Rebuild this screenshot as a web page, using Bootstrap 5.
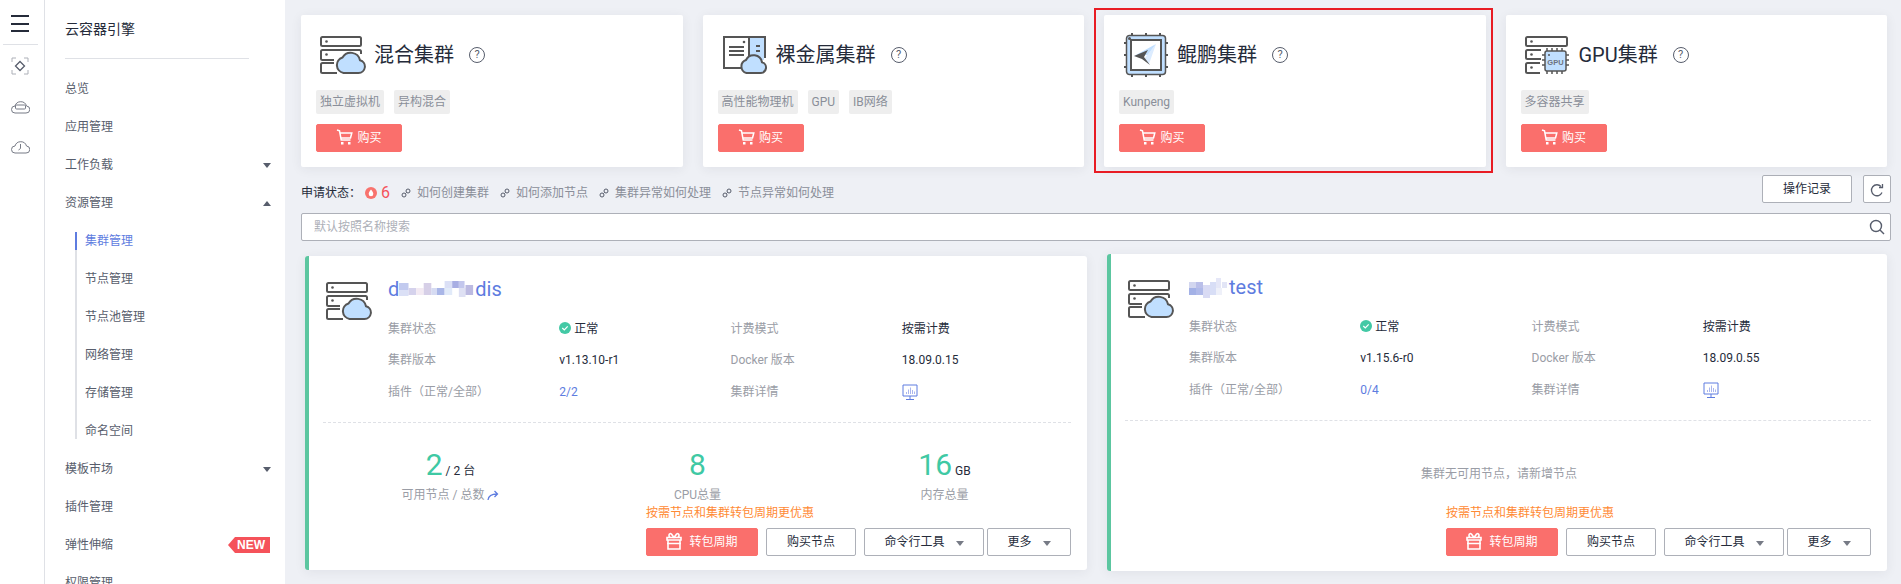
<!DOCTYPE html>
<html lang="zh-CN">
<head>
  <meta charset="UTF-8" />
  <meta name="viewport" content="width=device-width, initial-scale=1.0" />
  <title>云容器引擎</title>
  <link href="https://cdn.jsdelivr.net/npm/bootstrap@5.3.0/dist/css/bootstrap.min.css" rel="stylesheet">
  <style>
    html, body { height: 584px; overflow: hidden; }
    body {
      font-family: Roboto, "Noto Sans CJK SC", sans-serif;
      font-size: 12px;
      line-height: 18px;
      background-color: #eef0f5;
      color: #252b3a;
    }
    .page-wrap { height: 584px; }

    /* icon rail */
    .rail { width: 45px; flex: none; background: #fff; border-right: 1px solid #dfe1e6; }
    .burger { height: 45px; margin: 0 6px 0 3px; border-bottom: 1px solid #dfe1e6; padding: 15px 0 0 8px; }
    .burger i { display: block; width: 18px; height: 2px; background: #252b3a; margin-bottom: 5.5px; }
    .rail-ico { height: 40px; padding-left: 11px; padding-top: 11px; }
    .rail-ico:first-of-type { padding-top: 12px; }

    /* side nav */
    .side { width: 240px; flex: none; background: #fff; }
    .side-title { font-size: 14px; line-height: 20px; padding: 19px 0 0 20px; height: 58px; color: #252b3a; }
    .side-rule { height: 1px; background: #dfe1e6; margin: 0 36px 11px 20px; }
    .side-item { height: 38px; padding-left: 20px; padding-right: 14px; color: #575d6c; display: flex; align-items: center; justify-content: space-between; }
    .sub-list { position: relative; margin-left: 30px; }
    .sub-list::before { content: ""; position: absolute; left: 0; top: 10px; bottom: 11px; width: 2px; background: #dfe1e6; }
    .sub-item { height: 38px; padding-left: 10px; color: #575d6c; display: flex; align-items: center; position: relative; }
    .sub-item.on { color: #5e7ce0; }
    .sub-item.on::before { content: ""; position: absolute; left: 0; top: 10px; height: 18px; width: 2px; background: #5e7ce0; }
    .tri-down, .tri-up { width: 0; height: 0; border-left: 4px solid transparent; border-right: 4px solid transparent; }
    .tri-down { border-top: 5px solid #575d6c; }
    .tri-up { border-bottom: 5px solid #575d6c; }
    .new-tag {
      width: 42px; height: 16px; margin-right: 1px; background: #f5525a; color: #fff;
      font: bold 12px/16px "Liberation Sans", sans-serif; text-align: right; padding-right: 5px;
      clip-path: polygon(7px 0, 100% 0, 100% 100%, 7px 100%, 0 50%);
    }

    /* main column */
    .main-col { flex: 1; min-width: 0; padding: 15px 10px 0 16px; }
    .buy-grid { display: grid; grid-template-columns: repeat(4, 1fr); gap: 20px; margin-right: 4px; }
    .buy-box { background: #fff; border-radius: 2px; box-shadow: 0 2px 12px rgba(37,43,58,.07); padding: 21px 15px 15px; position: relative; height: 152px; }
    .buy-head { display: flex; align-items: center; height: 38px; padding-left: 4px; }
    .buy-head svg.big { width: 46px; height: 38px; flex: none; margin-right: 8px; }
    .buy-head svg.chip { width: 46px; height: 46px; margin: -3px 8px -3px 0; flex: none; }
    .buy-name { font-size: 20px; line-height: 28px; color: #252b3a; }
    .help-dot { width: 16px; height: 16px; border: 1.5px solid #575d6c; border-radius: 50%; margin-left: 15px; font-size: 11px; line-height: 13px; text-align: center; color: #575d6c; flex: none; }
    .tag-row { display: flex; gap: 10px; margin-top: 16px; }
    .spec-tag { background: #eeeeee; color: #8a8e99; height: 24px; line-height: 24px; padding: 0 4px; border-radius: 2px; }
    .btn-buy { width: 86px; height: 28px; margin-top: 10px; padding: 0; font-size: 12px; line-height: 26px; background: #fa6f6c; border: 1px solid #fa6f6c; border-radius: 2px; color: #fff; }
    .btn-buy:hover { background: #fa6f6c; color: #fff; }
    .btn-buy svg { vertical-align: -3px; margin-right: 4px; }
    .red-frame { position: absolute; top: -7px; bottom: -6px; left: -10px; right: -7px; border: 2px solid #e81c24; pointer-events: none; }

    .tool-row { margin-top: 8px; height: 28px; }
    .apply-text { padding-top: 8px; color: #252b3a; display: flex; align-items: center; }
    .fire-num { color: #f5525a; font-size: 16px; margin: 0 11px 0 4px; }
    .help-link { color: #8a8e99; margin-right: 11px; }
    .help-link svg { margin-right: 6px; vertical-align: -1px; }
    .btn-line { height: 28px; padding: 0; font-size: 12px; line-height: 26px; background: #fff; border: 1px solid #adb0b8; border-radius: 2px; color: #252b3a; }
    .btn-line:hover { background: #fff; color: #252b3a; border-color: #adb0b8; }
    .btn-log { width: 90px; margin-right: 11px; }
    .btn-fresh { width: 28px; }
    .find-box { position: relative; margin-top: 10px; }
    .find-box .form-control { height: 28px; font-size: 12px; padding: 0 12px; border: 1px solid #adb0b8; border-radius: 2px; }
    .find-box .form-control::placeholder { color: #adb0b8; }
    .find-box svg { position: absolute; right: 6px; top: 6px; }

    /* cluster cards */
    .cluster-grid { display: grid; grid-template-columns: 782px 780px; gap: 20px; margin: 13px 0 0 4px; }
    .cluster-box { background: #fff; border-left: 4px solid #5cc6a0; border-radius: 3px; box-shadow: 0 2px 12px rgba(37,43,58,.07); display: flex; flex-direction: column; height: 317px; }
    .cluster-box.first { margin-top: 2px; height: 314px; }
    .top-part { display: flex; padding-top: 19px; }
    .ico-cell { width: 79px; flex: none; padding: 7px 0 0 17px; }
    .cluster-box.second .ico-cell { width: 78px; }
    .name-line { font-size: 20px; line-height: 28px; color: #5e7ce0; display: flex; align-items: center; }
    .info-grid { display: grid; grid-template-columns: repeat(4, 171.25px); grid-auto-rows: 31.5px; margin-top: 10px; align-items: center; }
    .lbl { color: #9a9da6; }
    .ok-dot { display: inline-block; margin-right: 3px; vertical-align: -1px; }
    .blue-link { color: #5e7ce0; }
    .dash-line { border-top: 1px dashed #dfe1e6; margin: 14px 16px 0 14px; }
    .stat-grid { display: grid; grid-template-columns: repeat(3, 247px); padding: 24px 0 0 18px; text-align: center; }
    .stat-num { color: #3fc9a4; font-size: 30px; line-height: 36px; height: 36px; }
    .stat-unit { font-size: 12px; line-height: 12px; color: #252b3a; margin-left: 3px; }
    .stat-lbl { color: #9a9da6; margin-top: 3px; }
    .empty-msg { color: #9a9da6; text-align: center; padding-top: 44px; }
    .foot-part { margin-top: auto; margin-left: auto; padding: 0 16px 15px 0; }
    .promo { color: #ff8a34; line-height: 18px; margin-bottom: 6px; }
    .btn-cycle { width: 112px; height: 28px; padding: 0; font-size: 12px; line-height: 26px; background: #fa6f6c; border: 1px solid #fa6f6c; border-radius: 2px; color: #fff; margin-right: 8px; }
    .btn-cycle:hover { background: #fa6f6c; color: #fff; }
    .btn-cycle svg { vertical-align: -4px; margin-right: 7px; }
    .btn-node { width: 90px; margin-right: 8px; }
    .btn-cli { width: 120px; margin-right: 3px; }
    .btn-more { width: 84px; }
    .dropdown-toggle::after { margin-left: 11px; vertical-align: 0; border-top-width: 5px; border-left-width: 4px; border-right-width: 4px; border-top-color: #777b86; }
  </style>
</head>
<body>

<svg width="0" height="0" class="position-absolute">
  <symbol id="cloud-rack" viewBox="0 0 46 38">
    <g fill="none" stroke="#555" stroke-width="2">
      <rect x="1" y="1" width="40" height="9" rx="1.5"/>
      <path d="M14 24H2.5A1.5 1.5 0 0 1 1 22.500V15.500A1.500 1.500 0 0 1 2.500 14H39.500A1.500 1.500 0 0 1 41 15.500V18"/>
      <path d="M14 27H2.500A1.500 1.500 0 0 0 1 28.500V35.500A1.500 1.500 0 0 0 2.500 37H17"/>
    </g>
    <circle cx="6.500" cy="5.500" r="1.300" fill="#555"/>
    <circle cx="6.500" cy="18.500" r="1.300" fill="#555"/>
    <path d="M23.500 37H38.500a6.500 6.500 0 0 0 1.500-12.800A9.500 9.500 0 0 0 22.500 21.500a8 8 0 0 0 1 15.500Z" fill="#c0dfff" stroke="#555" stroke-width="2"/>
  </symbol>
  <symbol id="metal-rack" viewBox="0 0 46 38">
    <path d="M27 1H42V24H27Z" fill="#c0dfff"/>
    <path d="M19 32H2V1H27V22M27 1H43V22" fill="none" stroke="#555" stroke-width="2"/>
    <path d="M7 11H22M7 15H22M7 19H22" stroke="#555" stroke-width="1.800"/>
    <circle cx="22" cy="6" r="1.300" fill="#555"/>
    <path d="M34 10H38M34 15H38" stroke="#555" stroke-width="1.800"/>
    <path d="M24.500 37H38.500a5.500 5.500 0 0 0 1.500-10.800A8.500 8.500 0 0 0 24 24a6.800 6.800 0 0 0 .5 13Z" fill="#c0dfff" stroke="#555" stroke-width="2"/>
  </symbol>
  <symbol id="kp-chip" viewBox="0 0 46 46">
    <path d="M9 1V5M23 1V5M37 1V5M9 41V45M23 41V45M37 41V45M1 11H4M1 23H4M1 35H4M42 11H45M42 23H45M42 35H45" stroke="#555" stroke-width="2"/>
    <rect x="3.500" y="3.500" width="39" height="39" rx="3" fill="#c0dfff" stroke="#555" stroke-width="1.500"/>
    <rect x="8" y="8" width="30" height="30" fill="#fff" stroke="#555" stroke-width="2"/>
    <circle cx="6.500" cy="6.500" r="1.500" fill="#555"/>
    <path d="M33 12L25 23L11 24Z" fill="#c0dfff"/>
    <path d="M33 12L21 27L26 32Z" fill="#dcecff"/>
    <path d="M25 18L11 24L19 27L27 33L21 25Z" fill="#555"/>
  </symbol>
  <symbol id="gpu-rack" viewBox="0 0 46 38">
    <g fill="none" stroke="#555" stroke-width="2">
      <rect x="1" y="1" width="41" height="9" rx="1.500"/>
      <path d="M16 23H2.500A1.500 1.500 0 0 1 1 21.500V15.500A1.500 1.500 0 0 1 2.500 14H16"/>
      <path d="M15 27H2.500A1.500 1.500 0 0 0 1 28.500V35.500A1.500 1.500 0 0 0 2.500 37H15"/>
    </g>
    <circle cx="6.500" cy="5.500" r="1.300" fill="#555"/>
    <circle cx="6.500" cy="18.500" r="1.300" fill="#555"/>
    <circle cx="6.500" cy="31.500" r="1.300" fill="#555"/>
    <path d="M22 12V16M27 12V16M32 12V16M37 12V16M22 34V38M27 34V38M32 34V38M37 34V38M17 19H21M17 24H21M17 29H21M39 19H44M39 24H44M39 29H44" stroke="#555" stroke-width="1.500"/>
    <rect x="20" y="15" width="21" height="20" rx="2" fill="#c0dfff" stroke="#555" stroke-width="1.500"/>
    <circle cx="24" cy="19" r="1" fill="#555"/>
    <text x="30.500" y="29" font-family="Liberation Sans, sans-serif" font-weight="700" font-size="7.500" fill="#6d7280" text-anchor="middle">GPU</text>
  </symbol>
  <symbol id="cart-ico" viewBox="0 0 17 16">
    <path d="M1 1L3.500 1.800L5.200 11H14.500M4 4H15.800L14.500 9H5" fill="none" stroke="#fff" stroke-width="1.500"/>
    <rect x="5" y="13" width="2.500" height="2.500" fill="#fff"/>
    <rect x="12" y="13" width="2.500" height="2.500" fill="#fff"/>
  </symbol>
  <symbol id="chain-ico" viewBox="0 0 10 10">
    <g fill="none" stroke="#575d6c" stroke-width="1">
      <circle cx="7" cy="3" r="2"/>
      <circle cx="3" cy="7" r="2"/>
      <path d="M4.500 5.500L5.500 4.500"/>
    </g>
  </symbol>
  <symbol id="gift-ico" viewBox="0 0 16 18">
    <path d="M2 8V17H14V8M1 5.500H15V8H1ZM1 11.500H15M5 1.500L8 5.500L11 1.500M5 1.500A2 2 0 0 0 5 5.500M11 1.500A2 2 0 0 1 11 5.500" fill="none" stroke="#fff" stroke-width="1.600"/>
  </symbol>
  <symbol id="ok-ico" viewBox="0 0 12 12">
    <circle cx="6" cy="6" r="6" fill="#43c9a5"/>
    <path d="M3.300 6L5.300 8L8.700 4.300" fill="none" stroke="#fff" stroke-width="1.200"/>
  </symbol>
  <symbol id="screen-ico" viewBox="0 0 16 17">
    <path d="M1 1H15V12H1ZM8 12V15M4 15.500H12" fill="none" stroke="#5e7ce0" stroke-width="1"/>
    <path d="M4.500 10V8M6.500 10V5.500M8.500 10V3.500M10.500 10V6M12.500 10V7.500" stroke="#aab6ee" stroke-width="1"/>
  </symbol>
</svg>

<div class="page-wrap d-flex">
  <div class="rail">
    <div class="burger"><i></i><i></i><i></i></div>
    <div class="rail-ico">
      <svg width="18" height="18" viewBox="0 0 18 18" fill="none"><path d="M1 5V1H5M13 1H17V5M1 13V17H5M13 17H17V13" stroke="#adb0b8"/><path d="M9 4.500L13.500 9L9 13.500L4.500 9Z" stroke="#575d6c" stroke-width="1.300"/></svg>
    </div>
    <div class="rail-ico">
      <svg width="19" height="16" viewBox="0 0 19 16" fill="none" stroke="#777b86"><path d="M4 15H15a3.500 3.500 0 0 0 .5-7A6 6 0 0 0 4 8a3.500 3.500 0 0 0 0 7Z"/><rect x="4.500" y="7" width="10" height="4" rx="1"/></svg>
    </div>
    <div class="rail-ico">
      <svg width="19" height="16" viewBox="0 0 19 16" fill="none" stroke="#777b86"><path d="M4 15H15a3.500 3.500 0 0 0 .5-7A6 6 0 0 0 4 8a3.500 3.500 0 0 0 0 7Z"/><path d="M9.500 6V10.500L7.500 12"/></svg>
    </div>
  </div>

  <div class="side">
    <div class="side-title">云容器引擎</div>
    <div class="side-rule"></div>
    <div class="side-item">总览</div>
    <div class="side-item">应用管理</div>
    <div class="side-item"><span>工作负载</span><span class="tri-down"></span></div>
    <div class="side-item"><span>资源管理</span><span class="tri-up"></span></div>
    <div class="sub-list">
      <div class="sub-item on">集群管理</div>
      <div class="sub-item">节点管理</div>
      <div class="sub-item">节点池管理</div>
      <div class="sub-item">网络管理</div>
      <div class="sub-item">存储管理</div>
      <div class="sub-item">命名空间</div>
    </div>
    <div class="side-item"><span>模板市场</span><span class="tri-down"></span></div>
    <div class="side-item">插件管理</div>
    <div class="side-item"><span>弹性伸缩</span><span class="new-tag">NEW</span></div>
    <div class="side-item">权限管理</div>
  </div>

  <div class="main-col">
    <div class="buy-grid">
      <div class="buy-box">
        <div class="buy-head">
          <svg class="big"><use href="#cloud-rack"/></svg>
          <span class="buy-name">混合集群</span><span class="help-dot">?</span>
        </div>
        <div class="tag-row"><span class="spec-tag">独立虚拟机</span><span class="spec-tag">异构混合</span></div>
        <button class="btn btn-buy d-block"><svg width="17" height="16"><use href="#cart-ico"/></svg>购买</button>
      </div>
      <div class="buy-box">
        <div class="buy-head">
          <svg class="big"><use href="#metal-rack"/></svg>
          <span class="buy-name">裸金属集群</span><span class="help-dot">?</span>
        </div>
        <div class="tag-row"><span class="spec-tag">高性能物理机</span><span class="spec-tag">GPU</span><span class="spec-tag">IB网络</span></div>
        <button class="btn btn-buy d-block"><svg width="17" height="16"><use href="#cart-ico"/></svg>购买</button>
      </div>
      <div class="buy-box">
        <div class="red-frame"></div>
        <div class="buy-head">
          <svg class="chip"><use href="#kp-chip"/></svg>
          <span class="buy-name">鲲鹏集群</span><span class="help-dot">?</span>
        </div>
        <div class="tag-row"><span class="spec-tag">Kunpeng</span></div>
        <button class="btn btn-buy d-block"><svg width="17" height="16"><use href="#cart-ico"/></svg>购买</button>
      </div>
      <div class="buy-box">
        <div class="buy-head">
          <svg class="big"><use href="#gpu-rack"/></svg>
          <span class="buy-name">GPU集群</span><span class="help-dot">?</span>
        </div>
        <div class="tag-row"><span class="spec-tag">多容器共享</span></div>
        <button class="btn btn-buy d-block"><svg width="17" height="16"><use href="#cart-ico"/></svg>购买</button>
      </div>
    </div>

    <div class="tool-row d-flex justify-content-between">
      <div class="apply-text">
        <span>申请状态：</span>
        <svg width="12" height="12" viewBox="0 0 12 12" class="ms-1"><circle cx="6" cy="6" r="6" fill="#f8736e"/><path d="M6 2.500C7.500 4.500 8.300 5.500 8.300 7A2.300 2.300 0 0 1 3.700 7C3.700 5.500 4.500 4.500 6 2.500Z" fill="#fff"/></svg>
        <span class="fire-num">6</span>
        <span class="help-link"><svg width="10" height="10"><use href="#chain-ico"/></svg>如何创建集群</span>
        <span class="help-link"><svg width="10" height="10"><use href="#chain-ico"/></svg>如何添加节点</span>
        <span class="help-link"><svg width="10" height="10"><use href="#chain-ico"/></svg>集群异常如何处理</span>
        <span class="help-link"><svg width="10" height="10"><use href="#chain-ico"/></svg>节点异常如何处理</span>
      </div>
      <div class="d-flex">
        <button class="btn btn-line btn-log">操作记录</button>
        <button class="btn btn-line btn-fresh">
          <svg width="14" height="14" viewBox="0 0 14 14" fill="none" stroke="#575d6c" stroke-width="1.300"><path d="M12 9.500A5.500 5.500 0 1 1 11 3.500"/><path d="M12.500 1V4.500H9" /></svg>
        </button>
      </div>
    </div>

    <div class="find-box">
      <input class="form-control" type="text" placeholder="默认按照名称搜索">
      <svg width="16" height="16" viewBox="0 0 16 16" fill="none" stroke="#575d6c" stroke-width="1.400"><circle cx="7" cy="7" r="5.500"/><path d="M11 11L15 15"/></svg>
    </div>

    <div class="cluster-grid">
      <div class="cluster-box first">
        <div class="top-part">
          <div class="ico-cell"><svg width="46" height="38"><use href="#cloud-rack"/></svg></div>
          <div>
            <div class="name-line">d<svg width="76" height="24" viewBox="0 0 80 24" preserveAspectRatio="none"><g opacity=".75"><rect x="0" y="6" width="10" height="7" fill="#aeb9ea"/><rect x="0" y="13" width="10" height="6" fill="#cfd6f4"/><rect x="10" y="11" width="8" height="7" fill="#c8c3e6"/><rect x="18" y="11" width="8" height="7" fill="#f0e4ef"/><rect x="26" y="6" width="8" height="12" fill="#c9bfe0"/><rect x="34" y="11" width="6" height="7" fill="#c9cfee"/><rect x="40" y="11" width="8" height="7" fill="#8d9ee0"/><rect x="48" y="4" width="8" height="7" fill="#cfd6f4"/><rect x="48" y="11" width="8" height="7" fill="#d7e4f8"/><rect x="56" y="4" width="7" height="7" fill="#8c94da"/><rect x="63" y="4" width="6" height="7" fill="#b0b5e8"/><rect x="63" y="11" width="7" height="9" fill="#d3d6f0"/><rect x="70" y="8" width="8" height="10" fill="#a6a3d8"/></g></svg><span>dis</span></div>
            <div class="info-grid">
              <span class="lbl">集群状态</span>
              <span><svg class="ok-dot" width="12" height="12"><use href="#ok-ico"/></svg>正常</span>
              <span class="lbl">计费模式</span>
              <span>按需计费</span>
              <span class="lbl">集群版本</span>
              <span>v1.13.10-r1</span>
              <span class="lbl">Docker 版本</span>
              <span>18.09.0.15</span>
              <span class="lbl">插件（正常/全部）</span>
              <span class="blue-link">2/2</span>
              <span class="lbl">集群详情</span>
              <span><svg width="16" height="17"><use href="#screen-ico"/></svg></span>
            </div>
          </div>
        </div>
        <div class="dash-line"></div>
        <div class="stat-grid">
          <div>
            <div class="stat-num">2<span class="stat-unit">/ 2 台</span></div>
            <div class="stat-lbl">可用节点 / 总数 <svg width="12" height="11" viewBox="0 0 12 11" fill="none" stroke="#5e7ce0" stroke-width="1.300"><path d="M1 10C1.500 6 4 4 10 4M7.500 1L10.500 4L7.500 7"/></svg></div>
          </div>
          <div>
            <div class="stat-num">8</div>
            <div class="stat-lbl">CPU总量</div>
          </div>
          <div>
            <div class="stat-num">16<span class="stat-unit">GB</span></div>
            <div class="stat-lbl">内存总量</div>
          </div>
        </div>
        <div class="foot-part">
          <div class="promo">按需节点和集群转包周期更优惠</div>
          <div class="d-flex">
            <button class="btn btn-cycle"><svg width="16" height="18"><use href="#gift-ico"/></svg>转包周期</button>
            <button class="btn btn-line btn-node">购买节点</button>
            <button class="btn btn-line btn-cli dropdown-toggle">命令行工具</button>
            <button class="btn btn-line btn-more dropdown-toggle">更多</button>
          </div>
        </div>
      </div>

      <div class="cluster-box second">
        <div class="top-part">
          <div class="ico-cell"><svg width="46" height="38"><use href="#cloud-rack"/></svg></div>
          <div>
            <div class="name-line"><svg width="40" height="24" viewBox="0 0 40 24"><g opacity=".8"><rect x="0" y="7" width="7" height="6" fill="#c8cdec"/><rect x="0" y="13" width="7" height="7" fill="#8d9ee0"/><rect x="7" y="7" width="7" height="6" fill="#aab0e4"/><rect x="7" y="13" width="7" height="7" fill="#9da9e4"/><rect x="14" y="10" width="7" height="13" fill="#d0d3f2"/><rect x="21" y="7" width="6" height="13" fill="#cfd6f4"/><rect x="27" y="3" width="5" height="10" fill="#dfe2f6"/><rect x="27" y="13" width="6" height="7" fill="#eaedf8"/><rect x="33" y="7" width="5" height="6" fill="#dcdff4"/></g></svg><span>test</span></div>
            <div class="info-grid">
              <span class="lbl">集群状态</span>
              <span><svg class="ok-dot" width="12" height="12"><use href="#ok-ico"/></svg>正常</span>
              <span class="lbl">计费模式</span>
              <span>按需计费</span>
              <span class="lbl">集群版本</span>
              <span>v1.15.6-r0</span>
              <span class="lbl">Docker 版本</span>
              <span>18.09.0.55</span>
              <span class="lbl">插件（正常/全部）</span>
              <span class="blue-link">0/4</span>
              <span class="lbl">集群详情</span>
              <span><svg width="16" height="17"><use href="#screen-ico"/></svg></span>
            </div>
          </div>
        </div>
        <div class="dash-line"></div>
        <div class="empty-msg">集群无可用节点，请新增节点</div>
        <div class="foot-part">
          <div class="promo">按需节点和集群转包周期更优惠</div>
          <div class="d-flex">
            <button class="btn btn-cycle"><svg width="16" height="18"><use href="#gift-ico"/></svg>转包周期</button>
            <button class="btn btn-line btn-node">购买节点</button>
            <button class="btn btn-line btn-cli dropdown-toggle">命令行工具</button>
            <button class="btn btn-line btn-more dropdown-toggle">更多</button>
          </div>
        </div>
      </div>
    </div>
  </div>
</div>

<script src="https://cdn.jsdelivr.net/npm/bootstrap@5.3.0/dist/js/bootstrap.bundle.min.js"></script>
</body>
</html>
